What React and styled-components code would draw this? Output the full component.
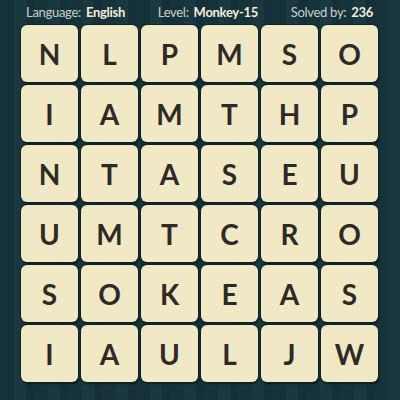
import React from 'react';
import styled, { createGlobalStyle } from 'styled-components';

const GlobalStyle = createGlobalStyle`
  html, body {
    margin: 0;
    padding: 0;
    width: 400px;
    height: 400px;
    overflow: hidden;
  }
`;

const Page = styled.div`
  width: 400px;
  height: 400px;
  box-sizing: border-box;
  background-color: #17333a;
  background-image: repeating-linear-gradient(
    90deg,
    #17333a 0px,
    #17333a 14px,
    #1a383f 14px,
    #1a383f 26px,
    #15303a 26px,
    #15303a 34px
  );
  font-family: Lato, "Open Sans", sans-serif;
  display: flex;
  flex-direction: column;
`;

const Header = styled.div`
  height: 23px;
  display: flex;
  align-items: center;
  justify-content: space-between;
  padding: 0 27px 0 26px;
  font-size: 13px;
  letter-spacing: -0.3px;
  color: #c9d2c9;
`;

const Info = styled.span`
  white-space: nowrap;
`;

const Value = styled.b`
  color: #f3eedb;
  font-weight: 700;
  margin-left: 5px;
`;

const Board = styled.div`
  display: grid;
  grid-template-columns: repeat(6, 57px);
  grid-auto-rows: 57px;
  gap: 3px;
  padding: 2px 0 0 21px;
`;

const Tile = styled.div`
  background: #f1e9c6;
  border-radius: 6px;
  box-shadow: 0 0 0 1px #0f2226, 1px 2px 2px rgba(0, 0, 0, 0.45);
  display: flex;
  align-items: center;
  justify-content: center;
  font-size: 28px;
  font-weight: 700;
  color: #2e2a25;
`;

const rows = ['NLPMSO', 'IAMTHP', 'NTASEU', 'UMTCRO', 'SOKEAS', 'IAULJW'];

export default function App() {
  return (
    <>
      <GlobalStyle />
      <Page>
        <Header>
          <Info>Language:<Value>English</Value></Info>
          <Info>Level:<Value>Monkey-15</Value></Info>
          <Info>Solved by:<Value>236</Value></Info>
        </Header>
        <Board>
          {rows.join('').split('').map((ch, i) => (
            <Tile key={i}>{ch}</Tile>
          ))}
        </Board>
      </Page>
    </>
  );
}
